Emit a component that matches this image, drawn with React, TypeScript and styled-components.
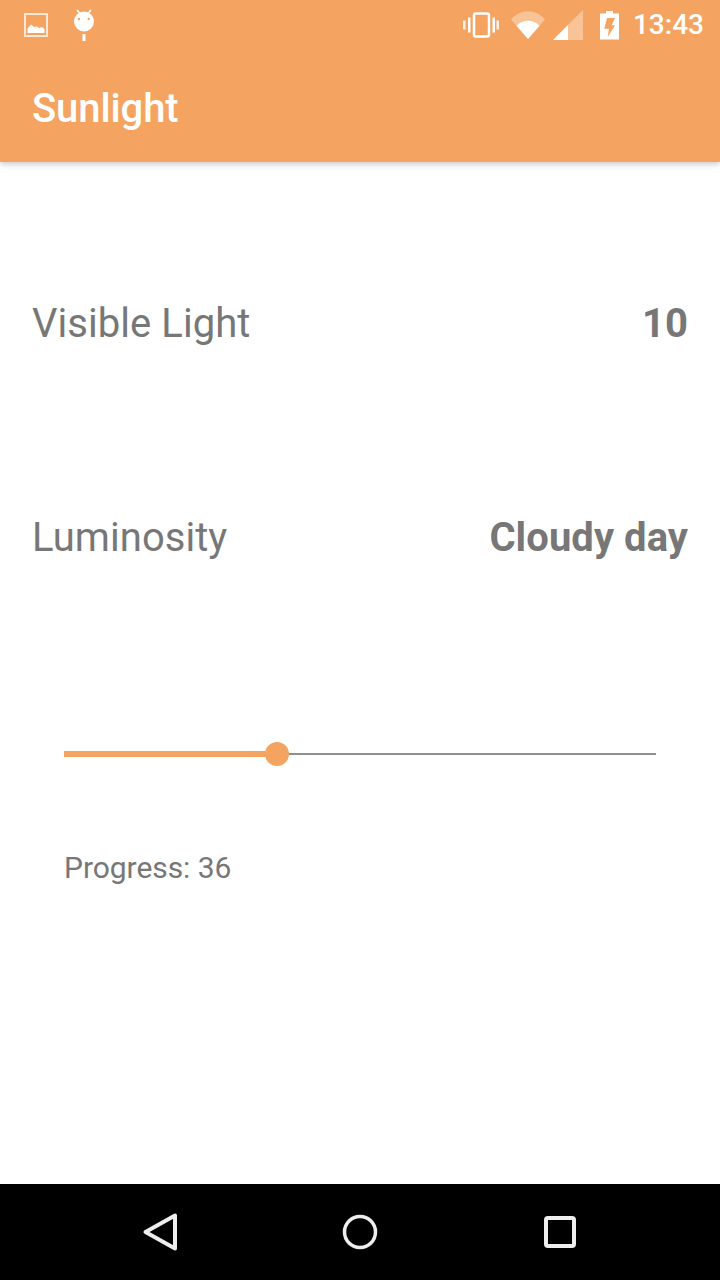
import styled, { createGlobalStyle } from 'styled-components';

const ACCENT = '#f4a460';
const TEXT = '#777777';
const PROGRESS = 36;

const GlobalStyle = createGlobalStyle`
  html, body {
    margin: 0;
    padding: 0;
    background: #ffffff;
  }
  body {
    font-family: Roboto, "Liberation Sans", sans-serif;
  }
`;

const Screen = styled.div`
  width: 720px;
  height: 1280px;
  display: flex;
  flex-direction: column;
  overflow: hidden;
`;

const Header = styled.header`
  background: ${ACCENT};
  box-shadow: 0 2px 6px rgba(0, 0, 0, 0.22);
  position: relative;
`;

const StatusBar = styled.div`
  height: 50px;
  display: flex;
  align-items: center;
  justify-content: space-between;
  padding: 0 16px 0 24px;
`;

const IconGroup = styled.div`
  display: flex;
  align-items: center;
`;

const StatusIcon = styled.svg<{ $left?: number }>`
  display: block;
  flex: none;
  margin-left: ${(p) => p.$left ?? 0}px;
`;

const Clock = styled.span`
  margin-left: 14px;
  color: #ffffff;
  font-size: 28px;
  font-weight: 500;
  line-height: 50px;
`;

const Toolbar = styled.div`
  height: 112px;
  box-sizing: border-box;
  display: flex;
  align-items: center;
  padding: 4px 32px 0;
`;

const Title = styled.h1`
  margin: 0;
  color: #ffffff;
  font-size: 40px;
  font-weight: 500;
  letter-spacing: -0.1px;
`;

const Content = styled.main`
  flex: 1;
  padding: 0 32px;
`;

const InfoRow = styled.div<{ $top: number }>`
  display: flex;
  justify-content: space-between;
  align-items: center;
  height: 48px;
  margin-top: ${(p) => p.$top}px;
  color: ${TEXT};
  font-size: 40px;
  letter-spacing: 0.05px;
`;

const Value = styled.span`
  font-weight: 700;
`;

const SliderBlock = styled.div`
  margin-top: 181px;
  padding: 0 32px;
`;

const Track = styled.div`
  position: relative;
  height: 24px;
  display: flex;
  align-items: center;
`;

const TrackFill = styled.div`
  flex: none;
  height: 6px;
  background: ${ACCENT};
`;

const TrackRest = styled.div`
  flex: 1;
  height: 2px;
  background: #8f8f8f;
`;

const Thumb = styled.div`
  position: absolute;
  top: 0;
  width: 24px;
  height: 24px;
  margin-left: -12px;
  border-radius: 50%;
  background: ${ACCENT};
`;

const ProgressLabel = styled.p`
  margin: 84px 0 0;
  color: ${TEXT};
  font-size: 30px;
  line-height: 36px;
  letter-spacing: -0.05px;
`;

const NavBar = styled.nav`
  height: 96px;
  flex: none;
  background: #000000;
  display: flex;
  align-items: center;
  justify-content: space-between;
  padding: 0 120px;
`;

const NavSlot = styled.div`
  width: 80px;
  display: flex;
  justify-content: center;
`;

function ImageIcon() {
  return (
    <StatusIcon width="24" height="24" viewBox="0 0 24 24">
      <rect x="1" y="1" width="22" height="22" fill="none" stroke="#fff" strokeOpacity="0.75" strokeWidth="2" />
      <path d="M3.500 20V15.500L7 11.500L10 14L13 13.500L15 15L18 14L20.500 16V20Z" fill="#fff" />
    </StatusIcon>
  );
}

function AndroidIcon() {
  return (
    <StatusIcon $left={24} width="24" height="32" viewBox="0 0 24 32">
      <path d="M5 1L8 4.500M19 1L16 4.500" stroke="#fff" strokeWidth="1.800" />
      <circle cx="12" cy="12.500" r="10" fill="#fff" />
      <circle cx="7" cy="10" r="1.200" fill={ACCENT} />
      <circle cx="16.700" cy="10" r="1.200" fill={ACCENT} />
      <rect x="10.500" y="25" width="3" height="7" fill="#fff" />
    </StatusIcon>
  );
}

function VibrateIcon() {
  return (
    <StatusIcon width="36" height="26" viewBox="0 0 36 26">
      <rect x="11" y="1.500" width="15" height="23" rx="2" fill="none" stroke="#fff" strokeWidth="2.500" />
      <rect x="0" y="8.500" width="2.500" height="9" fill="#fff" fillOpacity="0.85" />
      <rect x="5" y="5.500" width="2.500" height="15" fill="#fff" />
      <rect x="29.500" y="5.500" width="2.500" height="15" fill="#fff" />
      <rect x="33.500" y="8.500" width="2.500" height="9" fill="#fff" fillOpacity="0.85" />
    </StatusIcon>
  );
}

function WifiIcon() {
  return (
    <StatusIcon $left={12} width="34" height="28" viewBox="0 0 34 28">
      <path d="M0 8.500C9.500 -2.500 24.500 -2.500 34 8.500L17 28Z" fill="#fff" fillOpacity="0.35" />
      <path d="M5.500 14.800C12 8.200 22 8.200 28.500 14.800L17 28Z" fill="#fff" />
    </StatusIcon>
  );
}

function SignalIcon() {
  return (
    <StatusIcon $left={8} width="30" height="30" viewBox="0 0 30 30">
      <path d="M0 30L30 0V30Z" fill="#fff" fillOpacity="0.35" />
      <path d="M0 30L15 15V30Z" fill="#fff" />
    </StatusIcon>
  );
}

function BatteryIcon() {
  return (
    <StatusIcon $left={17} width="19" height="29" viewBox="0 0 19 29">
      <path
        fillRule="evenodd"
        fill="#fff"
        d="M6 0H13V2.500H19V28.500H0V2.500H6ZM7 7L4.300 17.700H9L7.700 26L15 14.300H11.700L15 7Z"
      />
    </StatusIcon>
  );
}

function BackIcon() {
  return (
    <svg width="40" height="40" viewBox="0 0 40 40">
      <path d="M5.500 20L35 3.500V36.500Z" fill="none" stroke="#eeeeee" strokeWidth="4" strokeLinejoin="round" />
    </svg>
  );
}

function HomeIcon() {
  return (
    <svg width="36" height="36" viewBox="0 0 36 36">
      <circle cx="18" cy="18" r="15.500" fill="none" stroke="#eeeeee" strokeWidth="3.500" />
    </svg>
  );
}

function RecentIcon() {
  return (
    <svg width="32" height="32" viewBox="0 0 32 32">
      <rect x="2" y="2" width="28" height="28" rx="2" fill="none" stroke="#eeeeee" strokeWidth="4" />
    </svg>
  );
}

export default function App() {
  return (
    <>
      <GlobalStyle />
      <Screen>
        <Header>
          <StatusBar>
            <IconGroup>
              <ImageIcon />
              <AndroidIcon />
            </IconGroup>
            <IconGroup>
              <VibrateIcon />
              <WifiIcon />
              <SignalIcon />
              <BatteryIcon />
              <Clock>13:43</Clock>
            </IconGroup>
          </StatusBar>
          <Toolbar>
            <Title>Sunlight</Title>
          </Toolbar>
        </Header>
        <Content>
          <InfoRow $top={137}>
            <span>Visible Light</span>
            <Value>10</Value>
          </InfoRow>
          <InfoRow $top={166}>
            <span>Luminosity</span>
            <Value>Cloudy day</Value>
          </InfoRow>
          <SliderBlock>
            <Track>
              <TrackFill style={{ width: `${PROGRESS}%` }} />
              <TrackRest />
              <Thumb style={{ left: `${PROGRESS}%` }} />
            </Track>
            <ProgressLabel>Progress: {PROGRESS}</ProgressLabel>
          </SliderBlock>
        </Content>
        <NavBar>
          <NavSlot>
            <BackIcon />
          </NavSlot>
          <NavSlot>
            <HomeIcon />
          </NavSlot>
          <NavSlot>
            <RecentIcon />
          </NavSlot>
        </NavBar>
      </Screen>
    </>
  );
}
